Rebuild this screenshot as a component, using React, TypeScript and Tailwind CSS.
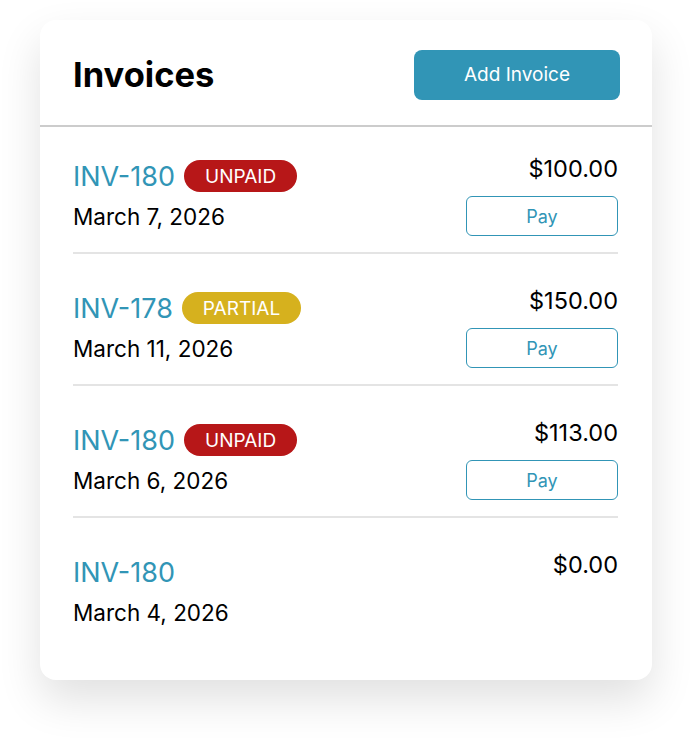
import React from 'react';

type Status = 'unpaid' | 'partial' | null;

const invoices: { id: string; status: Status; date: string; amount: string; payable: boolean }[] = [
  { id: 'INV-180', status: 'unpaid', date: 'March 7, 2026', amount: '$100.00', payable: true },
  { id: 'INV-178', status: 'partial', date: 'March 11, 2026', amount: '$150.00', payable: true },
  { id: 'INV-180', status: 'unpaid', date: 'March 6, 2026', amount: '$113.00', payable: true },
  { id: 'INV-180', status: null, date: 'March 4, 2026', amount: '$0.00', payable: false },
];

const StatusBadge: React.FC<{ status: Status }> = ({ status }) => {
  if (!status) return null;
  const color = status === 'unpaid' ? 'bg-[#b71718]' : 'bg-[#d6b11e]';
  return (
    <span className={`${color} inline-flex h-[32px] items-center rounded-full px-[21px] text-[19px] leading-none text-white`}>
      {status === 'unpaid' ? 'UNPAID' : 'PARTIAL'}
    </span>
  );
};

const App: React.FC = () => {
  return (
    <div className="min-h-screen bg-white pt-[20px] font-['Inter',sans-serif]">
      <div className="mx-[40px] w-[612px] rounded-2xl bg-white pb-[54px] shadow-[0_20px_44px_rgba(0,0,0,0.12)]">
        {/* Header */}
        <div className="flex items-center justify-between border-b-2 border-[#cccccc] pb-[25px] pl-[33px] pr-[32px] pt-[30px]">
          <h1 className="text-[34.5px] font-bold leading-none text-black">Invoices</h1>
          <button className="h-[50px] w-[206px] rounded-lg bg-[#3195b6] text-[19px] text-white">
            Add Invoice
          </button>
        </div>

        {/* List */}
        <div className="pl-[33px] pr-[34px]">
          {invoices.map((inv, i) => (
            <div
              key={i}
              className={`flex justify-between ${i < invoices.length - 1 ? 'border-b-2 border-[#e4e4e4] pb-[16px]' : ''} ${i > 0 ? 'pt-[31px]' : 'pt-[26px]'}`}
            >
              <div className="flex flex-col">
                <div className="mt-[7px] flex h-[32px] items-center gap-[9px]">
                  <span className="text-[27px] leading-none text-[#3195b6]">{inv.id}</span>
                  <StatusBadge status={inv.status} />
                </div>
                <span className="mt-[12px] text-[22.5px] leading-[26px] text-black">{inv.date}</span>
              </div>
              <div className="flex flex-col items-end">
                <span className="mt-[3px] text-[23.5px] leading-[26px] text-black">{inv.amount}</span>
                {inv.payable && (
                  <button className="mt-[14px] h-[40px] w-[152px] rounded-md border border-[#3195b6] text-[18px] text-[#3195b6]">
                    Pay
                  </button>
                )}
              </div>
            </div>
          ))}
        </div>
      </div>
    </div>
  );
};

export default App;
